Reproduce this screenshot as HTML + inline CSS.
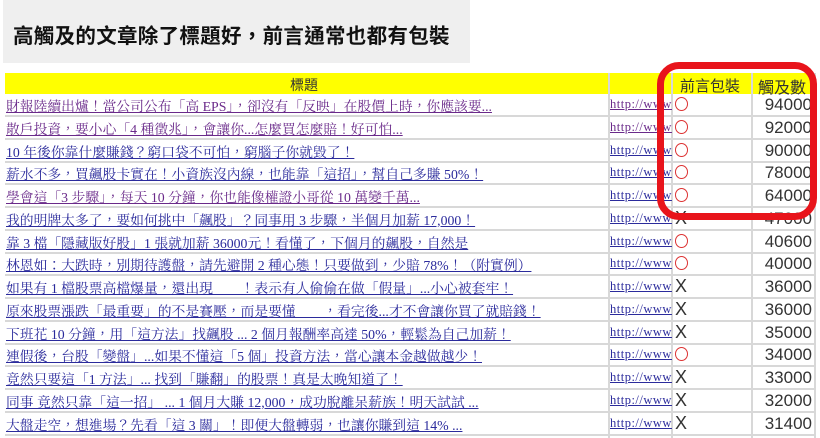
<!DOCTYPE html><html><head><meta charset="utf-8"><style>
body{margin:0;width:820px;height:438px;background:#fff;overflow:hidden;position:relative;font-family:"Liberation Sans","Noto Sans CJK TC",sans-serif}
.hd{position:absolute;left:3px;top:0;width:467px;height:63px;background:#efefef}
.hd span{position:absolute;left:10px;top:19px;font-size:20.5px;font-weight:bold;color:#111;letter-spacing:0.3px}
.yl{position:absolute;left:5px;top:73px;width:810px;height:21px;background:#ffff00}
.c{position:absolute;font-size:14px;color:#333}
.r{position:absolute;left:5px;width:810px;height:23px;border-bottom:2px solid #d8d8d8;box-sizing:border-box}
.t{position:absolute;left:1px;top:1px;font-family:"Liberation Serif","Noto Serif CJK TC",serif;font-size:13.8px;color:#2b2b9c;text-decoration:underline;white-space:nowrap;width:600px;overflow:hidden}
.u{position:absolute;left:605px;top:3px;font-family:"Liberation Serif",serif;font-size:12.5px;color:#2b2b9c;text-decoration:underline;width:62px;overflow:hidden;white-space:nowrap;letter-spacing:0.5px}
.m{position:absolute;left:670px;top:3px;width:11px;height:12px;border:1.5px solid #d33;border-radius:50%}
.x{position:absolute;left:670px;top:0px;font-size:18px;color:#333}
.n{position:absolute;right:3px;top:1px;font-size:17px;color:#333}
.v{position:absolute;top:73px;height:365px;border-left:2px solid #d8d8d8}
.box{position:absolute;left:657px;top:62px;width:146px;height:144px;border:7px solid #e8141b;border-radius:22px}
</style></head><body>
<div class="hd"><span>高觸及的文章除了標題好，前言通常也都有包裝</span></div>
<div class="yl"></div>
<div class="c" style="left:290px;top:75px">標題</div>
<div class="c" style="left:680px;top:75px;font-size:15px">前言包裝</div>
<div class="c" style="left:758px;top:74px;font-size:16px">觸及數</div>
<div class="v" style="left:608px"></div><div class="v" style="left:671px"></div><div class="v" style="left:751px"></div><div class="v" style="left:814px"></div>
<div class="r" style="top:94px"><span class="t" style="color:#6a2a8a">財報陸續出爐！當公司公布「高 EPS」，卻沒有「反映」在股價上時，你應該要...</span><span class="u" style="color:#6a2a8a">http://www</span><span class="m"></span><span class="n">94000</span></div>
<div class="r" style="top:117px"><span class="t" style="color:#6a2a8a">散戶投資，要小心「4 種徵兆」，會讓你...怎麼買怎麼賠！好可怕...</span><span class="u" style="color:#6a2a8a">http://www</span><span class="m"></span><span class="n">92000</span></div>
<div class="r" style="top:140px"><span class="t">10 年後你靠什麼賺錢？窮口袋不可怕，窮腦子你就毀了！</span><span class="u">http://www</span><span class="m"></span><span class="n">90000</span></div>
<div class="r" style="top:162px"><span class="t">薪水不多，買飆股卡實在！小資族沒內線，也能靠「這招」，幫自己多賺 50%！</span><span class="u">http://www</span><span class="m"></span><span class="n">78000</span></div>
<div class="r" style="top:185px"><span class="t" style="color:#6a2a8a">學會這「3 步驟」，每天 10 分鐘，你也能像權證小哥從 10 萬變千萬...</span><span class="u">http://www</span><span class="m"></span><span class="n">64000</span></div>
<div class="r" style="top:208px"><span class="t">我的明牌太多了，要如何挑中「飆股」？同事用 3 步驟，半個月加薪 17,000！</span><span class="u">http://www</span><span class="x">X</span><span class="n">47000</span></div>
<div class="r" style="top:231px"><span class="t">靠 3 檔「隱藏版好股」1 張就加薪 36000元！看懂了，下個月的飆股，自然是</span><span class="u">http://www</span><span class="m"></span><span class="n">40600</span></div>
<div class="r" style="top:253px"><span class="t">林恩如：大跌時，別期待護盤，請先避開 2 種心態！只要做到，少賠 78%！（附實例）</span><span class="u">http://www</span><span class="m"></span><span class="n">40000</span></div>
<div class="r" style="top:276px"><span class="t">如果有 1 檔股票高檔爆量，還出現　　！表示有人偷偷在做「假量」...小心被套牢！</span><span class="u">http://www</span><span class="x">X</span><span class="n">36000</span></div>
<div class="r" style="top:299px"><span class="t">原來股票漲跌「最重要」的不是賽壓，而是要懂　　，看完後...才不會讓你買了就賠錢！</span><span class="u">http://www</span><span class="x">X</span><span class="n">36000</span></div>
<div class="r" style="top:322px"><span class="t">下班花 10 分鐘，用「這方法」找飆股 ... 2 個月報酬率高達 50%，輕鬆為自己加薪！</span><span class="u">http://www</span><span class="x">X</span><span class="n">35000</span></div>
<div class="r" style="top:344px"><span class="t">連假後，台股「變盤」...如果不懂這「5 個」投資方法，當心讓本金越做越少！</span><span class="u">http://www</span><span class="m"></span><span class="n">34000</span></div>
<div class="r" style="top:367px"><span class="t">竟然只要這「1 方法」... 找到「賺翻」的股票！真是太晚知道了！</span><span class="u">http://www</span><span class="x">X</span><span class="n">33000</span></div>
<div class="r" style="top:390px"><span class="t">同事 竟然只靠「這一招」 ... 1 個月大賺 12,000，成功脫離呆薪族！明天試試 ...</span><span class="u">http://www</span><span class="x">X</span><span class="n">32000</span></div>
<div class="r" style="top:413px"><span class="t">大盤走空，想進場？先看「這 3 關」！即便大盤轉弱，也讓你賺到這 14% ...</span><span class="u">http://www</span><span class="x">X</span><span class="n">31400</span></div>
<div class="box"></div>
</body></html>
